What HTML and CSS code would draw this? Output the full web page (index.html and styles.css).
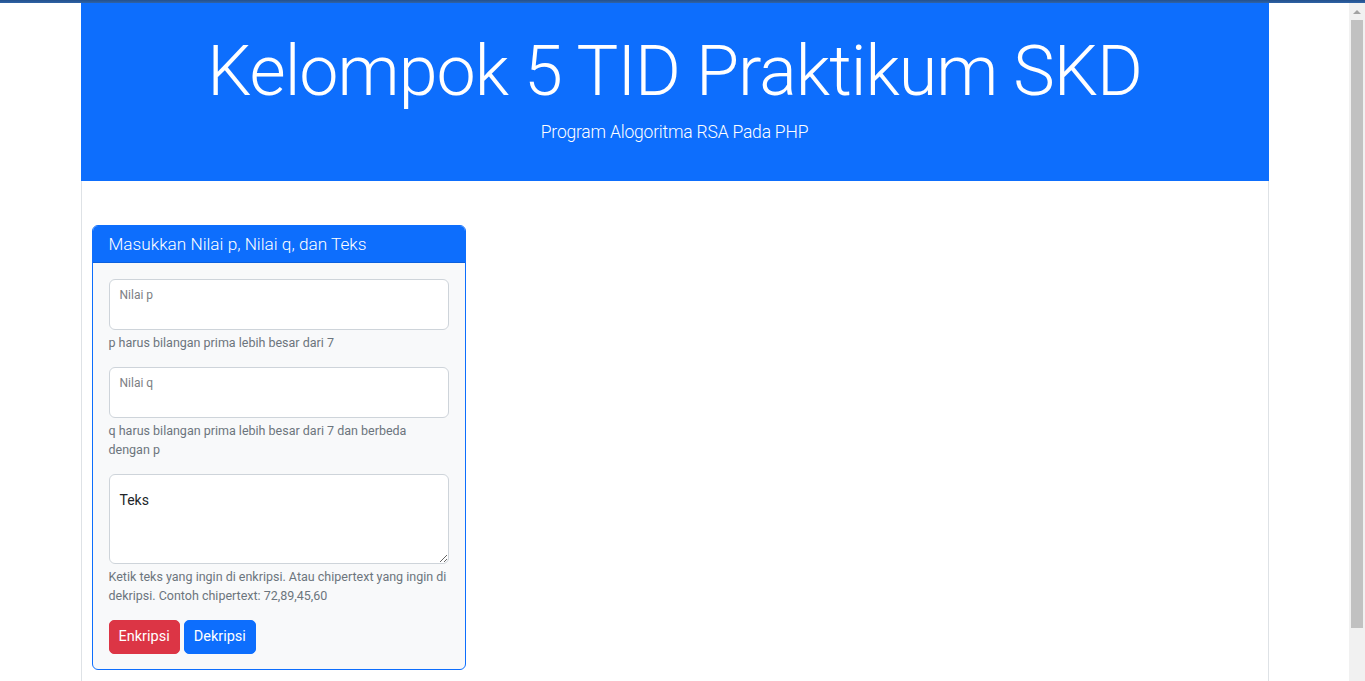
FILE: index.html
```html
<!DOCTYPE html>
<html lang="id">
<head>
<meta charset="utf-8">
<title>Kelompok 5 TID Praktikum SKD</title>
<link rel="stylesheet" href="styles.css">
</head>
<body>
<div class="topbar"></div>
<div class="frame">
  <div class="site">
    <div class="page">
      <header class="hero">
        <h1 class="hero-title">Kelompok 5 TID Praktikum SKD</h1>
        <p class="hero-lead">Program Alogoritma RSA Pada PHP</p>
      </header>
      <main class="content">
        <section class="card">
          <div class="card-header">Masukkan Nilai p, Nilai q, dan Teks</div>
          <form class="card-body">
            <div class="group">
              <div class="field">
                <input class="control" type="text" id="nilai-p">
                <label class="float-label" for="nilai-p">Nilai p</label>
              </div>
              <div class="help">p harus bilangan prima lebih besar dari 7</div>
            </div>
            <div class="group">
              <div class="field">
                <input class="control" type="text" id="nilai-q">
                <label class="float-label" for="nilai-q">Nilai q</label>
              </div>
              <div class="help">q harus bilangan prima lebih besar dari 7 dan berbeda dengan p</div>
            </div>
            <div class="group">
              <textarea class="control textarea">Teks</textarea>
              <div class="help">Ketik teks yang ingin di enkripsi. Atau chipertext yang ingin di dekripsi. Contoh chipertext: 72,89,45,60</div>
            </div>
            <div class="actions">
              <button type="button" class="btn btn-danger">Enkripsi</button>
              <button type="button" class="btn btn-primary">Dekripsi</button>
            </div>
          </form>
        </section>
      </main>
    </div>
  </div>
  <aside class="scrollbar" aria-hidden="true">
    <div class="sb-up"><span class="sb-arrow"></span></div>
    <div class="sb-thumb"></div>
  </aside>
</div>
</body>
</html>
```
FILE: styles.css
```css
* { box-sizing: border-box; }
html, body { margin: 0; padding: 0; }
body {
  font-family: Roboto, "Liberation Sans", sans-serif;
  color: #212529;
  background: #fff;
}
.topbar {
  height: 3px;
  background: linear-gradient(#23508c, #2f63a6);
}
.frame {
  display: flex;
  align-items: flex-start;
}
.site {
  flex: 1;
  min-width: 0;
}
.scrollbar {
  flex: none;
  width: 16px;
  height: 678px;
  position: sticky;
  top: 0;
  background: #f1f1f1;
  display: flex;
  flex-direction: column;
}
.sb-up {
  height: 17px;
  display: flex;
  align-items: center;
  justify-content: center;
}
.sb-arrow {
  width: 0;
  height: 0;
  border-left: 4px solid transparent;
  border-right: 4px solid transparent;
  border-bottom: 4px solid #a3a3a3;
}
.sb-thumb {
  height: 608px;
  margin: 0 2px;
  background: #c1c1c1;
}
.page {
  width: 1188px;
  margin: 0 auto;
  border-left: 1px solid #dee2e6;
  border-right: 1px solid #dee2e6;
}
.hero {
  margin: 0 -1px;
  background: #0d6efd;
  color: #fff;
  text-align: center;
  padding: 25px 0 34px;
}
.hero-title {
  margin: 0 0 3px;
  font-size: 70px;
  line-height: 86px;
  font-weight: 300;
  letter-spacing: -1px;
}
.hero-lead {
  margin: 0;
  font-size: 17.5px;
  line-height: 30px;
  font-weight: 300;
  letter-spacing: -0.2px;
}
.content {
  padding: 44px 10px 55px;
}
.card {
  width: 374px;
  border: 1px solid #0d6efd;
  border-radius: 6px;
  background: #f8f9fa;
  overflow: hidden;
}
.card-header {
  background: #0d6efd;
  color: #fff;
  padding: 6px 16px;
  font-size: 17.2px;
  line-height: 24px;
  font-weight: 300;
  border-bottom: 1px solid rgba(0,0,0,0.12);
}
.card-body {
  padding: 16px 16px 15px;
  margin: 0;
}
.group { margin-bottom: 15px; }
.field { position: relative; }
.control {
  display: block;
  width: 100%;
  height: 51px;
  border: 1px solid #ced4da;
  border-radius: 6px;
  background: #fff;
  font-family: inherit;
  font-size: 14px;
  color: #212529;
  padding: 6px 12px;
  margin: 0;
}
.float-label {
  position: absolute;
  left: 11px;
  top: 8px;
  font-size: 12px;
  line-height: 16px;
  color: #7d8084;
}
.textarea {
  height: 90px;
  padding: 15px 10px 6px;
  line-height: 21px;
  resize: vertical;
}
.help {
  margin-top: 4px;
  font-size: 12.5px;
  line-height: 18.4px;
  color: #6c757d;
}
.actions {
  display: flex;
  gap: 4px;
}
.btn {
  font-family: inherit;
  font-size: 14.5px;
  line-height: 22px;
  padding: 5px 9px;
  border: 1px solid transparent;
  border-radius: 5px;
  color: #fff;
}
.btn-danger { background: #dc3545; border-color: #dc3545; }
.btn-primary { background: #0d6efd; border-color: #0d6efd; }
```
